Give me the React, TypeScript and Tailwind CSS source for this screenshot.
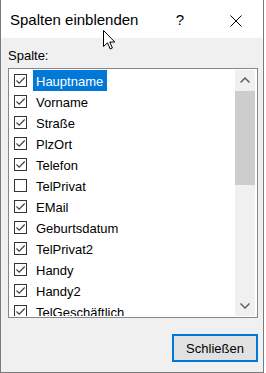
import React from 'react'

const columns = [
  { name: 'Hauptname', checked: true },
  { name: 'Vorname', checked: true },
  { name: 'Straße', checked: true },
  { name: 'PlzOrt', checked: true },
  { name: 'Telefon', checked: true },
  { name: 'TelPrivat', checked: false },
  { name: 'EMail', checked: true },
  { name: 'Geburtsdatum', checked: true },
  { name: 'TelPrivat2', checked: true },
  { name: 'Handy', checked: true },
  { name: 'Handy2', checked: true },
  { name: 'TelGeschäftlich', checked: true },
]

function CheckBox({ checked }: { checked: boolean }) {
  return (
    <div className="w-[13px] h-[13px] border border-[#333333] bg-white flex-shrink-0">
      {checked && (
        <svg width="11" height="11" viewBox="0 0 11 11">
          <path d="M1.5 5.5 L4.2 8.2 L9.7 2.5" fill="none" stroke="#3a3a3a" strokeWidth="1.1" />
        </svg>
      )}
    </div>
  )
}

export default function App() {
  return (
    <div className="relative w-[266px] h-[373px] bg-white font-['Liberation_Sans',Arial,sans-serif] text-black">
      <div className="w-[264px] h-[373px] flex flex-col border-x border-b border-[#7a7a7a]">
        {/* Title bar */}
        <div className="h-[38px] bg-white flex items-start pt-[11px] pl-[9px] pr-[21px]">
          <span className="text-[15px] leading-[17px]">Spalten einblenden</span>
          <span className="ml-auto w-[20px] text-center text-[15px] leading-[17px]">?</span>
          <svg className="ml-[40px] mt-[4px]" width="12" height="12" viewBox="0 0 12 12">
            <path d="M0.5 0.5 L11.5 11.5 M11.5 0.5 L0.5 11.5" stroke="#000" strokeWidth="1" />
          </svg>
        </div>

        {/* Body */}
        <div className="flex-1 bg-[#f0f0f0] pl-[7px] pr-[5px] flex flex-col">
          <div className="mt-[10px] text-[13px] leading-[15px]">Spalte:</div>

          <div className="mt-[5px] h-[250px] border border-[#828790] bg-white p-[1px] flex">
            <div className="flex-1 overflow-hidden">
              {columns.map((c, i) => (
                <div key={c.name} className="h-[21px] flex items-center pl-[4px]">
                  <CheckBox checked={c.checked} />
                  <span
                    className={
                      i === 0
                        ? 'ml-[6px] h-[21px] pl-[3px] pr-[4px] text-[13px] leading-[23px] bg-[#0078d7] text-white whitespace-nowrap'
                        : 'ml-[6px] h-[21px] px-[3px] text-[13px] leading-[23px] whitespace-nowrap'
                    }
                  >
                    {c.name}
                  </span>
                </div>
              ))}
            </div>

            {/* Scrollbar */}
            <div className="w-[20px] bg-[#f0f0f0] flex flex-col mr-[1px]">
              <div className="h-[20px] flex items-center justify-center">
                <svg width="10" height="6" viewBox="0 0 10 6">
                  <path d="M0.5 5.5 L5 1 L9.5 5.5" fill="none" stroke="#606060" strokeWidth="1.5" />
                </svg>
              </div>
              <div className="mt-[1px] h-[94px] bg-[#cdcdcd]" />
              <div className="flex-1" />
              <div className="h-[20px] flex items-center justify-center">
                <svg width="10" height="6" viewBox="0 0 10 6">
                  <path d="M0.5 0.5 L5 5 L9.5 0.5" fill="none" stroke="#606060" strokeWidth="1.5" />
                </svg>
              </div>
            </div>
          </div>

          <div className="mt-[16px] flex justify-end">
            <button className="w-[86px] h-[28px] border-2 border-[#0078d7] bg-[#e1e1e1] text-[13px] leading-[15px]">
              Schließen
            </button>
          </div>
        </div>
      </div>

      {/* Mouse pointer */}
      <svg className="absolute left-[103px] top-[30px]" width="13" height="20" viewBox="0 0 13 20">
        <path
          d="M0.5 0.5 L0.5 16.5 L4.5 12.8 L7.2 19 L9.4 18 L6.8 12 L11.8 12 Z"
          fill="#fff"
          stroke="#000"
          strokeWidth="1"
          strokeLinejoin="miter"
        />
      </svg>
    </div>
  )
}
